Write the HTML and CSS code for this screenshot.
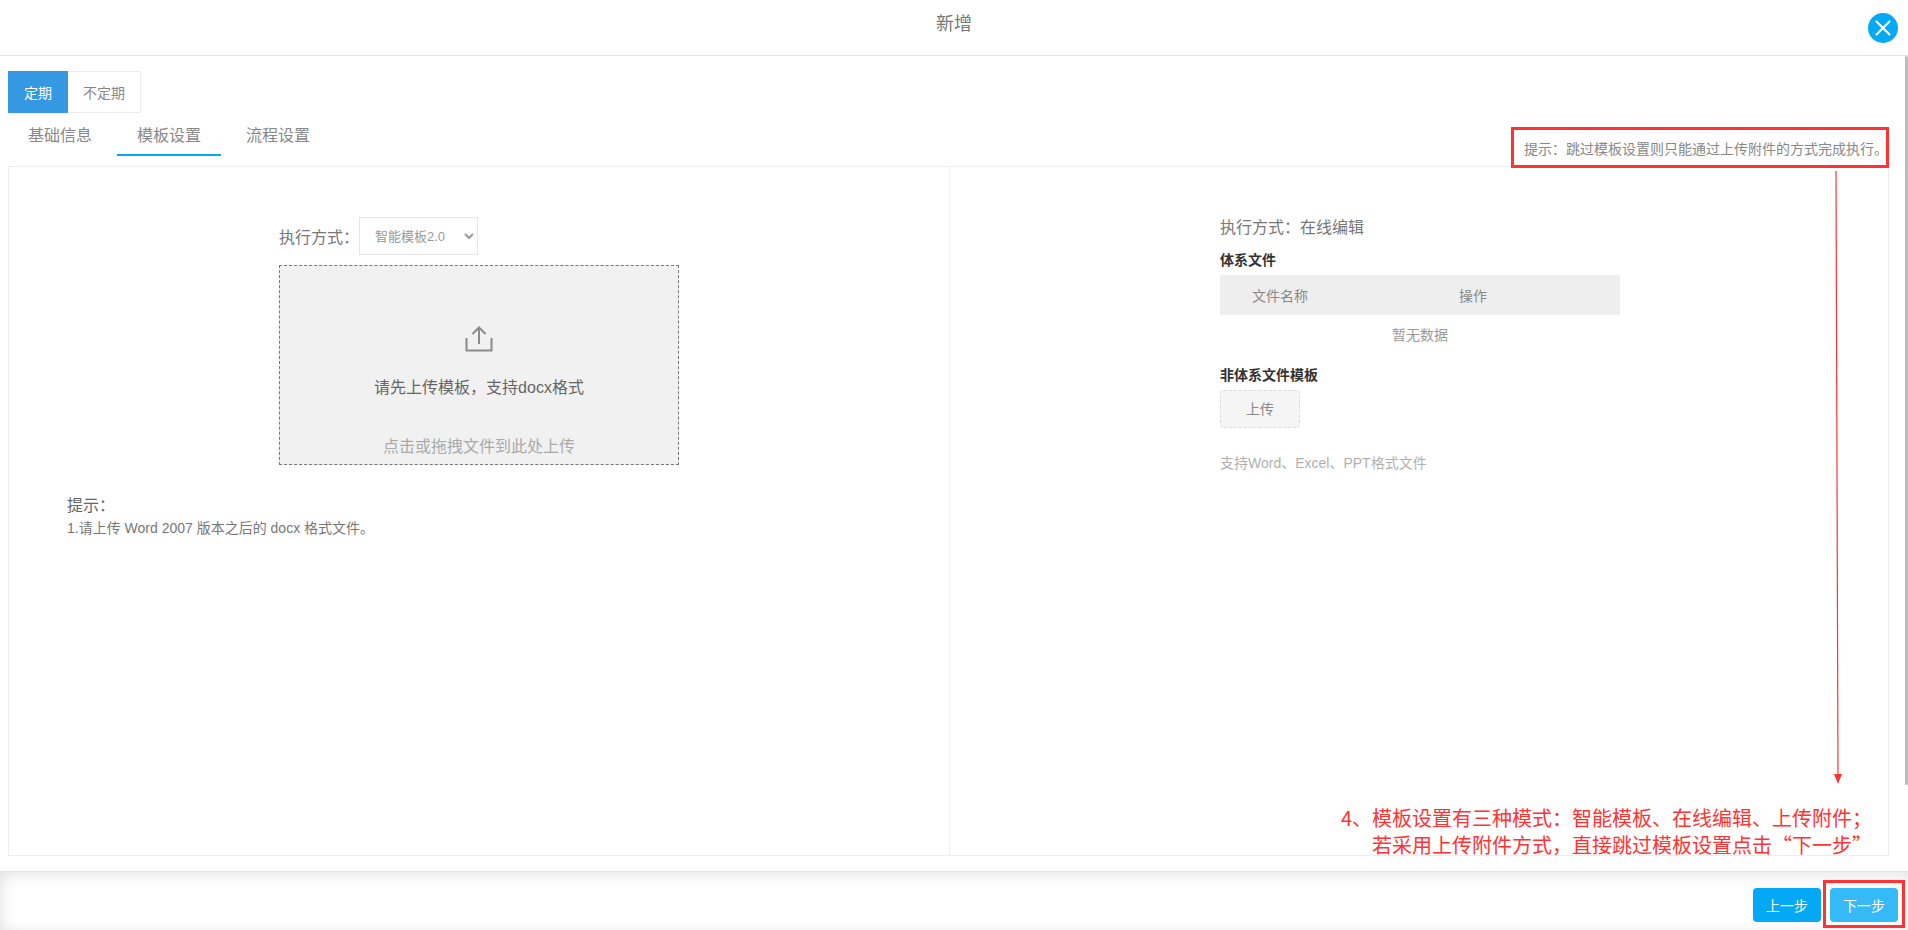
FILE: index.html
```html
<!DOCTYPE html>
<html lang="zh-CN">
<head>
  <meta charset="UTF-8">
  <title>新增</title>
  <link rel="stylesheet" href="styles.css">
</head>
<body>
  <div class="page">
    <header class="top-bar">
      <h1 class="top-title">新增</h1>
      <button class="close-btn" type="button" aria-label="关闭">
        <svg width="30" height="30" viewBox="0 0 30 30"><path d="M8 8L22 22M22 8L8 22" fill="none" stroke="#fff" stroke-width="2.2"/></svg>
      </button>
    </header>

    <main class="main">
      <div class="switcher">
        <span class="switch-item switch-on">定期</span>
        <span class="switch-item">不定期</span>
      </div>

      <nav class="tabs">
        <span class="tab">基础信息</span>
        <span class="tab tab-on">模板设置</span>
        <span class="tab">流程设置</span>
      </nav>

      <div class="panel">
        <section class="pane pane-left">
          <div class="way-row">
            <span class="way-label">执行方式：</span>
            <select class="way-select">
              <option>智能模板2.0</option>
            </select>
          </div>
          <div class="drop-box">
            <svg class="drop-icon" width="28" height="26" viewBox="0 0 28 26">
              <path d="M14 18V2M7.5 8L14 1.5L20.500 8M1.500 12V24.500H26.500V12" fill="none" stroke="#8a8a8a" stroke-width="2"/>
            </svg>
            <p class="drop-main">请先上传模板，支持docx格式</p>
            <p class="drop-sub">点击或拖拽文件到此处上传</p>
          </div>
          <div class="note">
            <p class="note-title">提示：</p>
            <p class="note-line">1.请上传 Word 2007 版本之后的 docx 格式文件。</p>
          </div>
        </section>

        <section class="pane pane-right">
          <p class="way-label way-online">执行方式：在线编辑</p>
          <h2 class="block-title">体系文件</h2>
          <div class="file-head">
            <span>文件名称</span>
            <span>操作</span>
          </div>
          <p class="file-empty">暂无数据</p>
          <h2 class="block-title block-title-two">非体系文件模板</h2>
          <button class="upload-btn" type="button">上传</button>
          <p class="upload-tip">支持Word、Excel、PPT格式文件</p>
        </section>
      </div>
    </main>

    <footer class="bottom-bar">
      <button class="step-btn" type="button">上一步</button>
      <button class="step-btn step-next" type="button">下一步</button>
    </footer>

    <div class="scroll-thumb"></div>

    <!-- red notes drawn over the page -->
    <div class="mark mark-tip">提示：跳过模板设置则只能通过上传附件的方式完成执行。</div>
    <div class="mark mark-next"></div>
    <svg class="mark-arrow" width="14" height="616" viewBox="0 0 14 616">
      <path d="M5 0L7 606" fill="none" stroke="#f33" stroke-width="1.200"/>
      <path d="M3 603H11L7 613Z" fill="#f33"/>
    </svg>
    <p class="mark-text">4、模板设置有三种模式：智能模板、在线编辑、上传附件；<br>若采用上传附件方式，直接跳过模板设置点击“下一步”</p>
  </div>
</body>
</html>
```

FILE: styles.css
```css
* {
  box-sizing: border-box;
}
html, body {
  margin: 0;
  height: 100%;
}
body {
  font-family: "Liberation Sans", "Noto Sans CJK SC", sans-serif;
  font-size: 14px;
  color: #777;
  background: #fff;
  overflow: hidden;
}
p, h1, h2 {
  margin: 0;
}
.page {
  position: relative;
  display: flex;
  flex-direction: column;
  height: 930px;
}

.top-bar {
  position: relative;
  flex: none;
  height: 56px;
  border-bottom: 1px solid #e5e5e5;
  text-align: center;
}
.top-title {
  font-size: 18px;
  font-weight: normal;
  line-height: 48px;
  color: #777;
}
.close-btn {
  position: absolute;
  top: 13px;
  right: 10px;
  width: 30px;
  height: 30px;
  padding: 0;
  border: none;
  border-radius: 50%;
  background: #03a9f4;
}
.close-btn svg {
  display: block;
}

.main {
  flex: 1;
  display: flex;
  flex-direction: column;
  min-height: 0;
  padding: 15px 19px 15px 8px;
}
.switcher {
  display: flex;
  flex: none;
  height: 42px;
}
.switch-item {
  display: flex;
  align-items: center;
  padding: 0 15px;
  border: 1px solid #eee;
  border-left: none;
  color: #888;
}
.switch-on {
  padding: 0 16px;
  border: none;
  background: #3498e3;
  color: #fff;
}
.tabs {
  display: flex;
  flex: none;
  gap: 5px;
  height: 43px;
}
.tab {
  width: 104px;
  padding-top: 11px;
  font-size: 16px;
  line-height: 24px;
  text-align: center;
  color: #888;
}
.tab-on {
  border-bottom: 2px solid #03a9f4;
}

.panel {
  flex: 1;
  display: flex;
  min-height: 0;
  margin-top: 10px;
  border: 1px solid #eee;
}
.pane {
  flex: 1;
  padding-top: 50px;
}
.pane-left {
  flex: none;
  width: 941px;
  border-right: 1px solid #eee;
  padding-left: 270px;
}
.pane-right {
  padding-left: 270px;
}
.way-row {
  display: flex;
  align-items: center;
  height: 38px;
}
.way-label {
  width: 80px;
  font-size: 16px;
  color: #777;
}
.way-select {
  width: 119px;
  height: 38px;
  padding-left: 11px;
  border: 1px solid #e5e5e5;
  background: #fff;
  font-family: inherit;
  font-size: 13px;
  color: #999;
}
.drop-box {
  display: flex;
  flex-direction: column;
  align-items: center;
  width: 400px;
  height: 200px;
  margin-top: 10px;
  padding-top: 60px;
  border: 1px dashed #777;
  background: #f1f1f1;
}
.drop-icon {
  display: block;
}
.drop-main {
  margin-top: 24px;
  font-size: 16px;
  line-height: 24px;
  color: #666;
}
.drop-sub {
  margin-top: 35px;
  font-size: 16px;
  line-height: 24px;
  color: #aaa;
}
.note {
  margin: 29px 0 0 -212px;
}
.note-title {
  font-size: 16px;
  line-height: 24px;
  color: #666;
}
.note-line {
  margin-top: -1px;
  font-size: 14px;
  line-height: 22px;
  color: #777;
}

.way-online {
  width: auto;
  line-height: 24px;
  margin-top: -1px;
}
.block-title {
  margin-top: 10px;
  font-size: 14px;
  font-weight: bold;
  line-height: 20px;
  color: #333;
}
.file-head {
  display: grid;
  grid-template-columns: 207px 1fr;
  align-items: center;
  width: 400px;
  height: 40px;
  margin-top: 5px;
  padding-left: 32px;
  background: #eee;
  color: #888;
}
.file-empty {
  width: 400px;
  margin-top: 8px;
  line-height: 24px;
  text-align: center;
  color: #999;
}
.block-title-two {
  margin-top: 18px;
}
.upload-btn {
  display: block;
  width: 80px;
  height: 38px;
  margin-top: 5px;
  padding: 0 0 2px;
  border: 1px dashed #ddd;
  border-radius: 4px;
  background: #f5f5f5;
  font-family: inherit;
  font-size: 14px;
  color: #888;
}
.upload-tip {
  margin-top: 24px;
  line-height: 22px;
  color: #b0b0b0;
}

.bottom-bar {
  display: flex;
  flex: none;
  justify-content: flex-end;
  gap: 9px;
  height: 59px;
  padding: 16px 10px 0 0;
  box-shadow: inset 0 5px 14px rgba(0, 0, 0, 0.07), inset 0 -3px 8px rgba(0, 0, 0, 0.02), inset 8px 0 14px rgba(0, 0, 0, 0.03);
  border-top: 1px solid #e5e5e5;
}
.step-btn {
  width: 68px;
  height: 34px;
  padding: 0;
  border: none;
  border-radius: 4px;
  background: #03a9f4;
  font-family: inherit;
  font-size: 14px;
  color: #fff;
}
.step-next {
  background: #36b9f7;
}

.scroll-thumb {
  position: absolute;
  top: 56px;
  right: 0;
  width: 3px;
  height: 729px;
  border-radius: 2px;
  background: #bbb;
}
.mark {
  position: absolute;
  border: 3px solid #f33;
}
.mark-tip {
  top: 127px;
  left: 1511px;
  width: 378px;
  height: 41px;
  padding-left: 10px;
  font-size: 14px;
  line-height: 38px;
  white-space: nowrap;
  color: #888;
}
.mark-next {
  top: 880px;
  left: 1823px;
  width: 82px;
  height: 48px;
}
.mark-arrow {
  position: absolute;
  top: 171px;
  left: 1831px;
}
.mark-text {
  position: absolute;
  top: 804px;
  right: 36px;
  font-family: "Noto Sans CJK SC", sans-serif;
  font-size: 20px;
  line-height: 27px;
  text-align: right;
  color: #f33;
}
```
